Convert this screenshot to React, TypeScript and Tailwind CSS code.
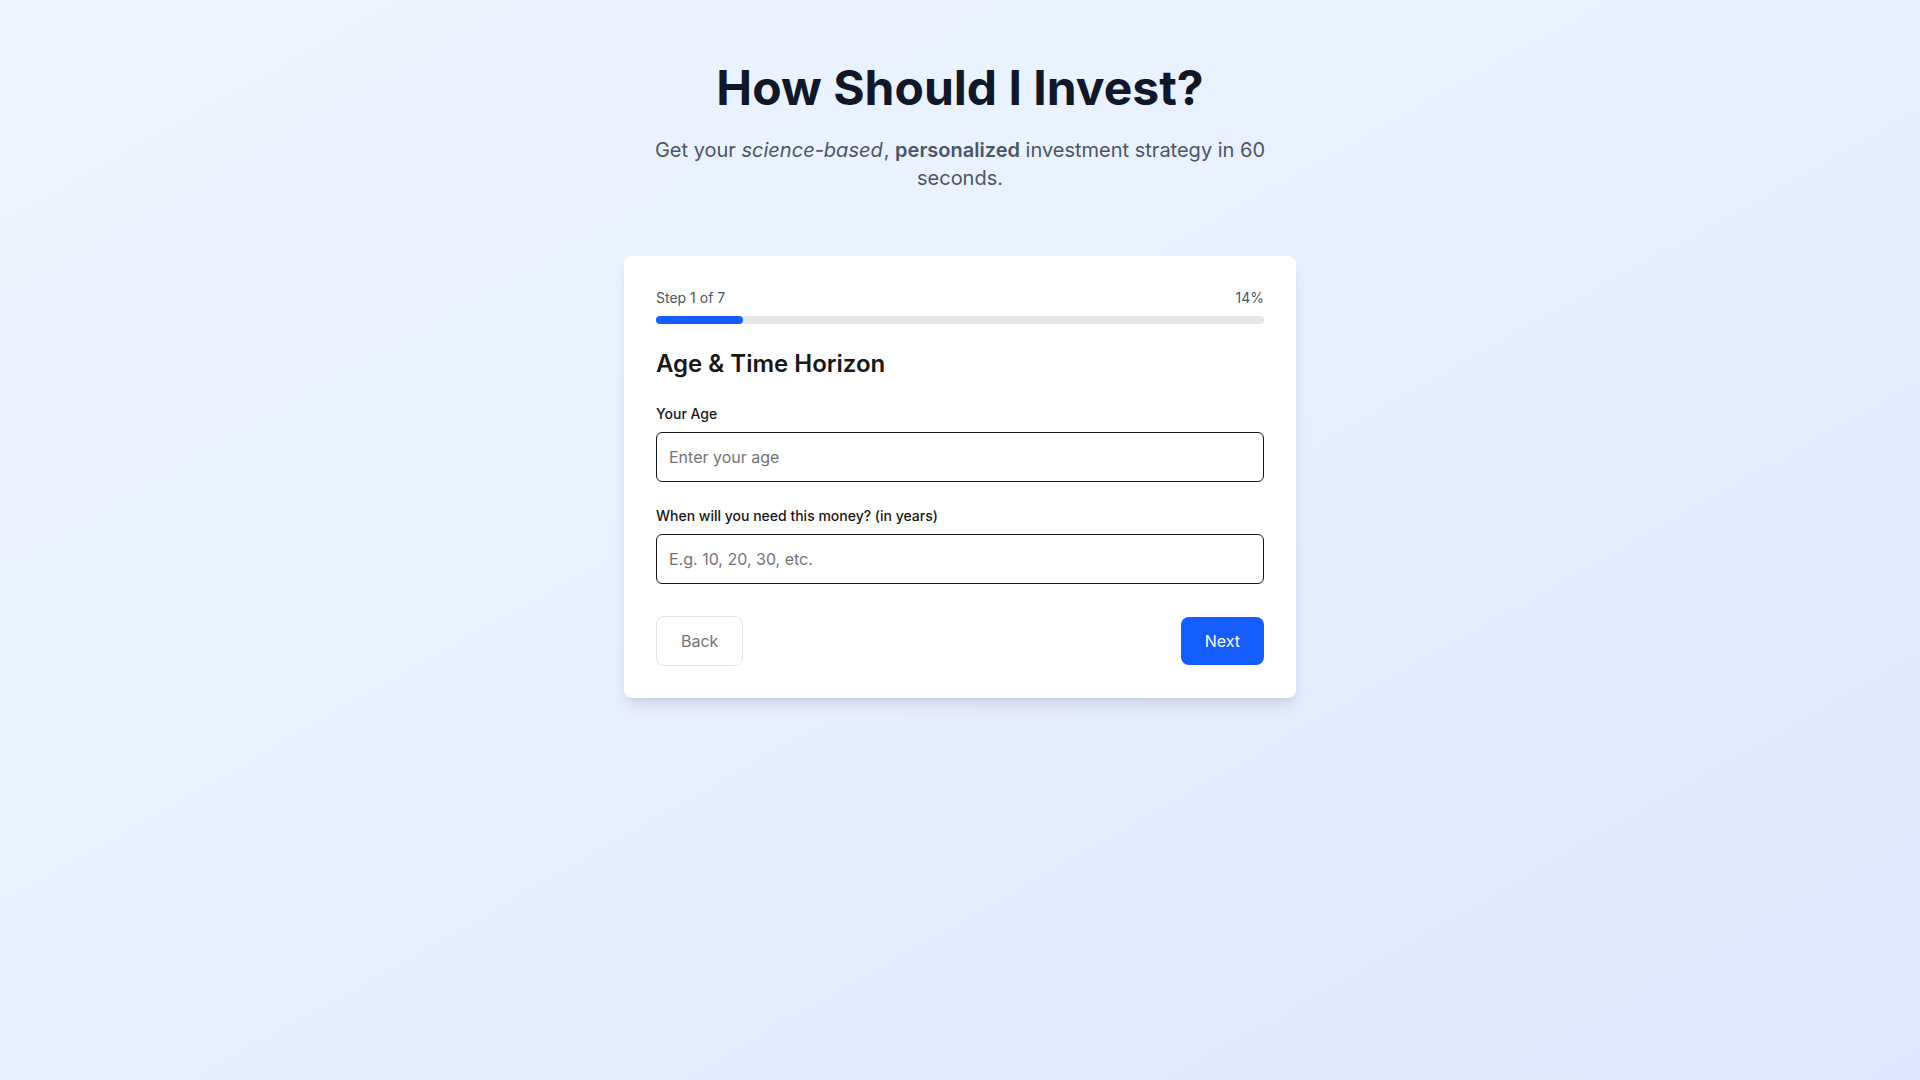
import { useState } from "react";

const TOTAL_STEPS = 7;

export default function App() {
  const [step] = useState(1);
  const [age, setAge] = useState("");
  const [horizon, setHorizon] = useState("");
  const progress = Math.round((step / TOTAL_STEPS) * 100);

  return (
    <div
      className="min-h-screen bg-linear-to-br from-blue-50 to-indigo-100 px-4 pt-16 pb-12"
      style={{ fontFamily: "Inter, 'Noto Sans', sans-serif" }}
    >
      <header className="mx-auto mb-16 max-w-2xl text-center">
        <h1 className="mb-6 text-5xl leading-none font-bold text-gray-900">How Should I Invest?</h1>
        <p className="text-xl leading-7 text-gray-600">
          Get your <em className="pr-px">science-based</em>,{" "}
          <strong className="font-semibold">personalized</strong> investment strategy in 60 seconds.
        </p>
      </header>

      <div className="mx-auto max-w-2xl rounded-lg bg-white p-8 shadow-lg">
        <div className="mb-2 flex items-center justify-between text-sm text-gray-600">
          <span>
            Step {step} of {TOTAL_STEPS}
          </span>
          <span>{progress}%</span>
        </div>
        <div className="mb-6 h-2 w-full rounded-full bg-gray-200">
          <div className="h-2 rounded-full bg-blue-600" style={{ width: `${(step / TOTAL_STEPS) * 100}%` }} />
        </div>

        <h2 className="mb-6 text-2xl font-semibold text-neutral-900">Age &amp; Time Horizon</h2>

        <div className="space-y-6">
          <div>
            <label className="mb-2 block text-sm font-medium text-neutral-900">Your Age</label>
            <input
              type="number"
              value={age}
              onChange={(e) => setAge(e.target.value)}
              placeholder="Enter your age"
              className="w-full rounded-md border border-neutral-900 px-3 py-3 text-base text-neutral-900 outline-none placeholder:text-neutral-500"
            />
          </div>
          <div>
            <label className="mb-2 block text-sm font-medium text-neutral-900">
              When will you need this money? (in years)
            </label>
            <input
              type="number"
              value={horizon}
              onChange={(e) => setHorizon(e.target.value)}
              placeholder="E.g. 10, 20, 30, etc."
              className="w-full rounded-md border border-neutral-900 px-3 py-3 text-base text-neutral-900 outline-none placeholder:text-neutral-500"
            />
          </div>
        </div>

        <div className="mt-8 flex items-center justify-between">
          <button
            type="button"
            disabled
            className="rounded-lg border border-neutral-200 bg-white px-6 py-3 text-base text-neutral-500 disabled:cursor-not-allowed"
          >
            Back
          </button>
          <button type="button" className="rounded-lg bg-blue-600 px-6 py-3 text-base text-white hover:bg-blue-700">
            Next
          </button>
        </div>
      </div>
    </div>
  );
}
